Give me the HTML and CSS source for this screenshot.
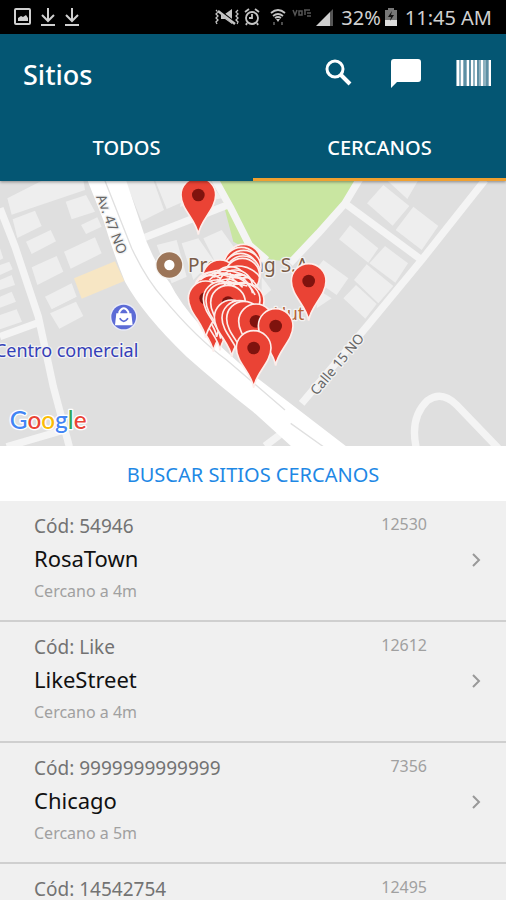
FILE: index.html
```html
<!DOCTYPE html>
<html lang="es">
<head>
  <meta charset="UTF-8">
  <meta name="viewport" content="width=device-width, initial-scale=1.0">
  <title>Sitios</title>
  <link rel="stylesheet" href="styles.css">
</head>
<body>
  <div class="status-bar">
    <div class="status-left">
      <svg width="18" height="18" viewBox="0 0 18 18"><rect x="1" y="1" width="15" height="15" rx="1" fill="none" stroke="#d0d0d0" stroke-width="2"/><path d="M4 13V10l3-2 2 1 3-2 2 3v3z" fill="#d0d0d0"/></svg>
      <svg width="16" height="20" viewBox="0 0 16 20"><path d="M8 1v12M2 8l6 6 6-6M1 18h14" fill="none" stroke="#d0d0d0" stroke-width="2"/></svg>
      <svg width="16" height="20" viewBox="0 0 16 20"><path d="M8 1v12M2 8l6 6 6-6M1 18h14" fill="none" stroke="#d0d0d0" stroke-width="2"/></svg>
    </div>
    <div class="status-right">
      <svg width="26" height="18" viewBox="0 0 26 18"><path d="M2 2l2 2-2 2 2 2-2 2 2 2-2 2 1 2M24 2l-2 2 2 2-2 2 2 2-2 2 2 2-1 2" fill="none" stroke="#c4c4c4" stroke-width="1.3"/><path d="M7 6h4l7-5v15l-7-5H7z" fill="#c4c4c4"/><path d="M4 2l18 14" stroke="#000" stroke-width="3"/><path d="M4 3l17 13" stroke="#c4c4c4" stroke-width="2.4"/></svg>
      <svg width="16" height="18" viewBox="0 0 16 18"><circle cx="8" cy="10" r="6" fill="none" stroke="#c4c4c4" stroke-width="1.8"/><path d="M1 4l4-3M15 4l-4-3M8 6v4H5M3 15l-1 2M13 15l1 2" fill="none" stroke="#c4c4c4" stroke-width="1.8"/></svg>
      <svg class="wifi" width="16" height="18" viewBox="0 0 16 18"><path d="M1 5q7-6 14 0M3 8q5-4 10 0M5 10q3-2 6 0" fill="none" stroke="#c4c4c4" stroke-width="1.8"/><path d="M6 11h4l-2 3z" fill="#c4c4c4"/><path d="M4 14v3M12 14v3" stroke="#666" stroke-width="1.5"/></svg>
      <svg width="20" height="18" viewBox="0 0 20 18"><path d="M1 2l2 5 2-5M7 3h3v4H7zM13 2v5M12 2h6M15 5h4M15 8h4" fill="none" stroke="#555" stroke-width="1.5"/></svg>
      <svg width="19" height="18" viewBox="0 0 19 18"><path d="M0 18L14 4v14z" fill="#cfcfcf"/><path d="M14 4l3-3v17h-3z" fill="#555"/></svg>
      <span class="percent">32%</span>
      <svg class="battery" width="12" height="18" viewBox="0 0 12 18"><path d="M3 0h6v2h3v16H0V2h3z" fill="#777"/><path d="M0 12h12v6H0z" fill="#ddd"/><path d="M7 3L3 9h3l-1 4 4-6H6z" fill="#111"/></svg>
      <time class="clock">11:45 AM</time>
    </div>
  </div>

  <header class="header">
    <div class="toolbar">
      <h1 class="title">Sitios</h1>
      <div class="actions">
        <button class="icon-button" aria-label="Buscar">
          <svg width="32" height="32" viewBox="0 0 32 32" fill="none" stroke="#fff"><circle cx="11" cy="11" r="8" stroke-width="3"/><path d="M16 16l10 10" stroke-width="4"/></svg>
        </button>
        <button class="icon-button" aria-label="Mensajes">
          <svg width="32" height="32" viewBox="0 0 32 32"><path d="M4 1h24q3 0 3 3v17q0 3-3 3H7l-6 6V4q0-3 3-3z" fill="#fff"/></svg>
        </button>
        <button class="icon-button" aria-label="Código de barras">
          <svg width="36" height="28" viewBox="0 0 36 28"><path d="M0 0h35v26H0z" fill="#8fb2c0"/><path d="M2 0v26M6 0v26M12 0v26M16 0v26M20 0v26M26 0v26M34 0v26" stroke="#fff" stroke-width="2"/><path d="M9 0v26M14 0v26M22 0v26M31 0v26" stroke="#2b6d87" stroke-width="1"/></svg>
        </button>
      </div>
    </div>
    <nav class="tabs">
      <a class="tab" href="#todos">TODOS</a>
      <a class="tab active" href="#cercanos">CERCANOS</a>
    </nav>
  </header>

  <div class="map">
    <svg class="map-canvas" viewBox="0 3 1518 795" preserveAspectRatio="xMidYMid slice">
      <defs>
        <g id="pin">
          <path d="M0 119C-5 76-52 44-52 0A52 52 0 0 1 52 0C52 44 5 76 0 119z" fill="#ea4335" stroke="#fdeeeb" stroke-width="5"/>
          <circle r="19" fill="#7f130e"/>
        </g>
        <path id="plain-pin" d="M0 119C-5 76-52 44-52 0A52 52 0 0 1 52 0C52 44 5 76 0 119z" fill="#ea4335" stroke="#fdeeeb" stroke-width="5"/>
      </defs>
      <rect width="1518" height="800" fill="#dfdfdf"/>

      <!-- buildings -->
      <g fill="#eeeeee">
        <path d="M22 55L130 0H250L255 30L35 104zM197 65L258 45L285 95L215 118zM38 118L105 92L125 138L52 174zM78 185L152 150L168 184L95 222zM243 135L292 112L305 140L258 162zM192 215L285 172L305 220L212 266zM95 262L170 228L190 275L112 315zM135 350L215 310L230 350L155 388zM150 400L228 365L250 408L178 446z"/>
        <path d="M0 205L10 235L0 240zM0 255L28 245L38 268L0 285zM0 300L35 285L45 315L0 330zM0 350L35 335L48 365L0 383zM0 405L50 388L66 425L0 448z"/>
        <path d="M375 0H460L492 90L425 124zM465 0H560L550 65L500 87zM560 0H625L665 55L540 80zM470 195L530 180L560 290L515 310zM545 190L595 175L640 240L580 300zM610 175L665 150L715 220L650 255z"/>
        <path d="M1150 15L1228 78L1178 137L1101 70zM1160 0H1255L1222 57zM1240 80L1315 138L1265 210L1187 150zM1050 136L1135 205L1105 248L1017 178zM1155 198L1224 250L1186 308L1108 250zM1100 253L1180 318L1135 370L1062 300zM1068 315L1130 372L1096 416L1030 355zM970 240L1045 295L1010 345L930 290zM955 330L995 355L950 385zM785 290L814 330L785 355z"/>
      </g>
      <path d="M222 295L345 244L373 303L245 356z" fill="#f7e6c4"/>
      <path d="M655 0H1080L965 155L885 234Q845 250 800 235L745 210L700 185L675 90z" fill="#c9e6a1"/>

      <!-- streets -->
      <g fill="none" stroke="#f4f4f4" stroke-width="22" stroke-linejoin="round">
        <path d="M0 85L45 200L115 410L160 620L208 800M0 470L115 428M20 800L200 748"/>
        <path d="M435 172L690 72"/>
        <path d="M640 -10L690 80L748 195L800 240M870 250L955 160L1035 70L1080 -5M1035 70L1265 240M1455 0L1265 240L1100 440L905 670M795 798L845 760"/>
        <path d="M1495 805L1370 675Q1325 630 1282 662Q1230 712 1248 800"/>
      </g>
      <path d="M262 0L310 120Q340 220 375 305Q430 405 560 530Q650 610 759 695L875 800H1040L760 585Q570 430 510 310Q450 230 425 140L378 0z" fill="#fff"/>
      <path d="M314 0L395 205Q440 300 490 355Q590 475 680 540L855 690M872 730L970 800" fill="none" stroke="#e0e0e0" stroke-width="4"/>

      <!-- street and place names -->
      <g class="street">
        <text transform="translate(288 50) rotate(69)">Av. 47 NO</text>
        <text transform="translate(950 648) rotate(-50)">Calle 15 NO</text>
      </g>
      <circle cx="508" cy="255" r="42" fill="#f5f2ef"/>
      <circle cx="508" cy="255" r="27" fill="#fff" stroke="#9c7558" stroke-width="23"/>
      <text class="place" x="564" y="276">Procesing S.A.</text>
      <text class="place food" x="913" y="420">Pizza Hut</text>
      <circle cx="371" cy="411" r="41" fill="#e9ebf7"/>
      <circle cx="371" cy="411" r="37" fill="#5c6bd6"/>
      <path d="M349 400H394L398 436H345z" fill="#fff"/>
      <path d="M358 402V396Q371 374 385 396V402" fill="none" stroke="#fff" stroke-width="6"/>
      <path d="M359 415Q371 433 384 415" fill="none" stroke="#5c6bd6" stroke-width="5"/>
      <text class="mall" x="415" y="532">Centro comercial</text>

      <!-- markers, back to front -->
      <use href="#pin" x="595" y="45"/>
      <use href="#plain-pin" x="731" y="245"/>
      <use href="#plain-pin" x="724" y="254"/>
      <use href="#plain-pin" x="731" y="263"/>
      <use href="#plain-pin" x="722" y="272"/>
      <use href="#plain-pin" x="729" y="280"/>
      <use href="#plain-pin" x="660" y="292"/>
      <use href="#plain-pin" x="727" y="287"/>
      <use href="#plain-pin" x="690" y="312"/>
      <use href="#plain-pin" x="636" y="328"/>
      <use href="#plain-pin" x="632" y="338"/>
      <use href="#plain-pin" x="706" y="322"/>
      <use href="#plain-pin" x="640" y="396"/>
      <use href="#plain-pin" x="660" y="392"/>
      <use href="#plain-pin" x="650" y="352"/>
      <use href="#pin" x="617" y="355"/>
      <use href="#plain-pin" x="740" y="363"/>
      <use href="#plain-pin" x="728" y="360"/>
      <use href="#plain-pin" x="662" y="357"/>
      <use href="#plain-pin" x="670" y="362"/>
      <use href="#pin" x="684" y="368"/>

      <!-- outlines where the marker heads pile up -->
      <g fill="none" stroke="#fdeeeb" stroke-width="5">
        <path d="M588 305Q640 250 725 282Q765 300 778 330M600 300Q650 262 712 292Q750 310 765 345M628 300Q680 245 740 262Q772 276 778 290"/>
        <path d="M640 292Q690 270 735 300Q752 318 758 340M655 306Q690 282 728 322M672 318Q705 255 762 305M660 280Q700 300 745 292M650 298Q690 320 745 308M690 278Q690 300 730 316M680 290L735 285M684 304L742 318"/>
      </g>

      <use href="#plain-pin" x="695" y="412"/>
      <use href="#plain-pin" x="718" y="414"/>
      <use href="#plain-pin" x="732" y="416"/>
      <use href="#pin" x="768" y="424"/>
      <use href="#pin" x="926" y="303"/>
      <use href="#pin" x="827" y="438"/>
      <use href="#pin" x="761" y="504"/>

      <text class="google" x="29" y="748"><tspan fill="#4285f4">G</tspan><tspan fill="#ea4335">o</tspan><tspan fill="#fbbc05">o</tspan><tspan fill="#4285f4">g</tspan><tspan fill="#34a853">l</tspan><tspan fill="#ea4335">e</tspan></text>
    </svg>
  </div>

  <button class="search-near">BUSCAR SITIOS CERCANOS</button>

  <main class="list">
    <a class="item" href="#54946">
      <div class="info">
        <span class="code">Cód: 54946</span>
        <span class="name">RosaTown</span>
        <span class="distance">Cercano a 4m</span>
      </div>
      <span class="number">12530</span>
      <svg class="chevron" width="10" height="14" viewBox="0 0 10 14"><path d="M2 1l6 6-6 6"/></svg>
    </a>
    <a class="item" href="#like">
      <div class="info">
        <span class="code">Cód: Like</span>
        <span class="name">LikeStreet</span>
        <span class="distance">Cercano a 4m</span>
      </div>
      <span class="number">12612</span>
      <svg class="chevron" width="10" height="14" viewBox="0 0 10 14"><path d="M2 1l6 6-6 6"/></svg>
    </a>
    <a class="item" href="#9999999999999">
      <div class="info">
        <span class="code">Cód: 9999999999999</span>
        <span class="name">Chicago</span>
        <span class="distance">Cercano a 5m</span>
      </div>
      <span class="number">7356</span>
      <svg class="chevron" width="10" height="14" viewBox="0 0 10 14"><path d="M2 1l6 6-6 6"/></svg>
    </a>
    <a class="item" href="#14542754">
      <div class="info">
        <span class="code">Cód: 14542754</span>
      </div>
      <span class="number">12495</span>
      <svg class="chevron" width="10" height="14" viewBox="0 0 10 14"><path d="M2 1l6 6-6 6"/></svg>
    </a>
  </main>
</body>
</html>
```
FILE: styles.css
```css
:root {
  --primary-color: #045673;
  --accent-color: #f0a030;
  --link-color: #1e88e5;
  --list-background: #f0f0f0;
}

* {
  box-sizing: border-box;
  margin: 0;
  padding: 0;
}

body {
  font-family: 'Noto Sans', sans-serif;
  background: var(--list-background);
  height: 100vh;
  display: flex;
  flex-direction: column;
  overflow: hidden;
}

a {
  color: inherit;
  text-decoration: none;
}

button {
  border: 0;
  background: none;
  font-family: inherit;
}

svg {
  display: block;
}

/* Status bar */
.status-bar {
  flex: none;
  height: 34px;
  padding: 0 14px;
  background: #000;
  color: #d0d0d0;
  display: flex;
  justify-content: space-between;
  align-items: center;
  font-size: 20px;
}

.status-left {
  display: flex;
  align-items: center;
  gap: 8px;
}

.status-right {
  display: flex;
  align-items: center;
  gap: 4px;
}

.wifi {
  margin: 0 2px 0 6px;
}

.percent {
  margin-left: 2px;
}

.battery {
  margin-right: 4px;
}

/* Header */
.header {
  flex: none;
  background: var(--primary-color);
  color: #fff;
  box-shadow: 0 1px 3px rgba(0, 0, 0, 0.4);
  z-index: 1;
}

.toolbar {
  height: 80px;
  padding: 0 14px 0 23px;
  display: flex;
  justify-content: space-between;
  align-items: center;
}

.title {
  font-size: 27px;
  font-weight: 500;
}

.actions {
  display: flex;
  align-items: center;
  gap: 34px;
}

.tabs {
  display: flex;
  height: 67px;
}

.tab {
  flex: 1;
  display: flex;
  justify-content: center;
  align-items: center;
  border-top: 3px solid transparent;
  border-bottom: 3px solid transparent;
  font-size: 20px;
  font-weight: 500;
}

.tab.active {
  border-bottom-color: var(--accent-color);
}

/* Map */
.map {
  flex: none;
  height: 265px;
}

.map-canvas {
  width: 100%;
  height: 100%;
}

.map text {
  paint-order: stroke;
  stroke: #f2f2f2;
  stroke-width: 8px;
  stroke-linejoin: round;
}

.street {
  font-size: 41px;
  fill: #666;
}

.place {
  font-size: 57px;
  fill: #7a5c48;
}

.food {
  font-size: 54px;
  fill: #b5653a;
  text-anchor: end;
}

.mall {
  font-size: 54px;
  fill: #3440b8;
  text-anchor: end;
}

.map .google {
  font-family: Lato, sans-serif;
  font-size: 73px;
  font-weight: 500;
  stroke: #fff;
}

/* Search button */
.search-near {
  flex: none;
  height: 55px;
  padding-top: 2px;
  background: #fff;
  color: var(--link-color);
  font-size: 20px;
}

/* List */
.list {
  flex: 1;
  overflow: hidden;
}

.item {
  height: 121px;
  padding: 10px 25px 0 34px;
  border-bottom: 2px solid #cfcfcf;
  display: flex;
}

.info {
  flex: 1;
  display: flex;
  flex-direction: column;
}

.code {
  font-size: 19px;
  line-height: 30px;
  color: #737373;
}

.name {
  font-size: 22px;
  line-height: 34px;
  color: #111;
}

.distance {
  font-size: 16px;
  line-height: 32px;
  color: #a0a0a0;
}

.number {
  width: 110px;
  margin-right: 44px;
  font-size: 16px;
  line-height: 26px;
  text-align: right;
  color: #a0a0a0;
}

.chevron {
  margin-top: 42px;
  fill: none;
  stroke: #999;
  stroke-width: 2;
}
```
